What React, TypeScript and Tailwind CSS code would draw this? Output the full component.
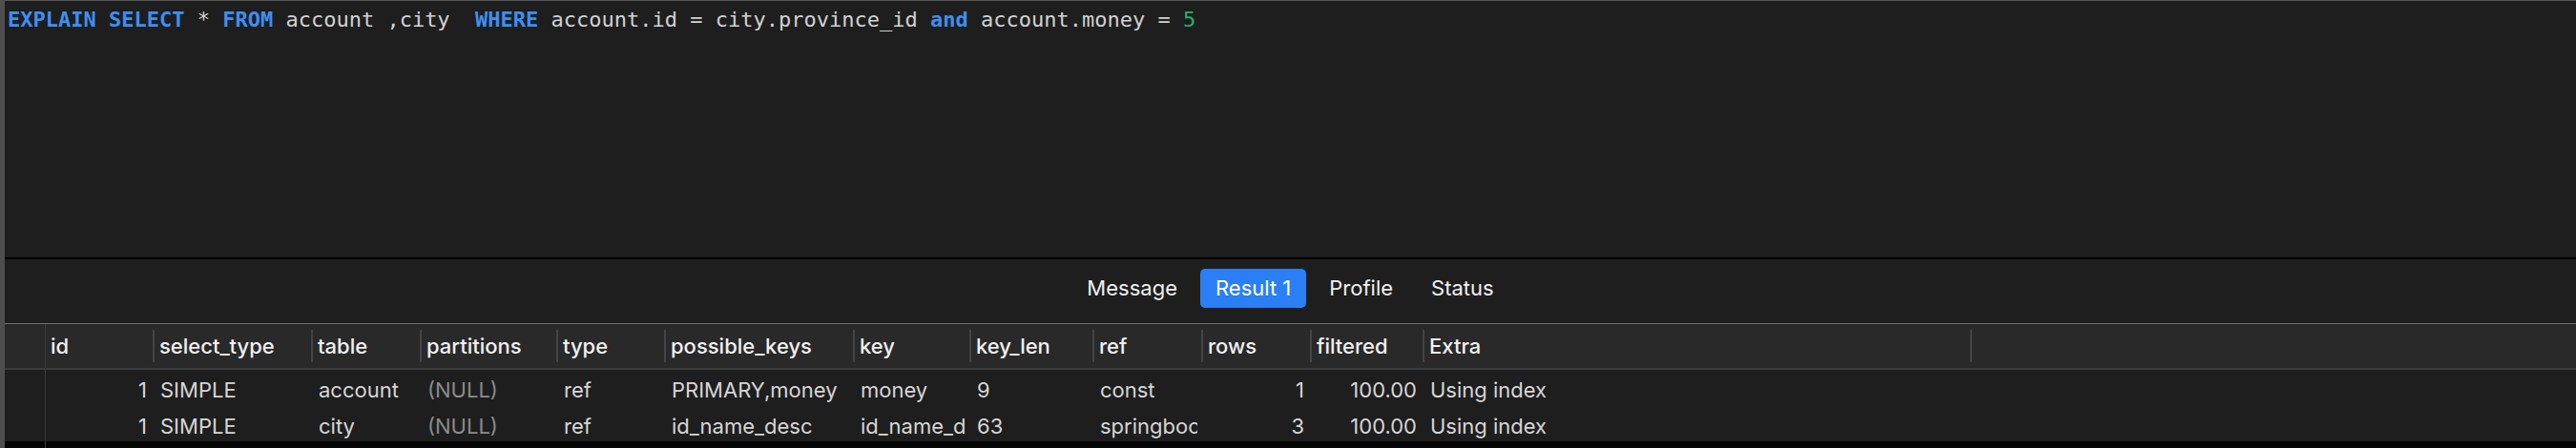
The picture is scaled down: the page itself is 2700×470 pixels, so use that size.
import React from 'react'

type Col = { name: string; w: number; right?: boolean }

const COLS: Col[] = [
  { name: 'id', w: 114, right: true },
  { name: 'select_type', w: 166 },
  { name: 'table', w: 114 },
  { name: 'partitions', w: 143 },
  { name: 'type', w: 113 },
  { name: 'possible_keys', w: 198 },
  { name: 'key', w: 122 },
  { name: 'key_len', w: 129 },
  { name: 'ref', w: 114 },
  { name: 'rows', w: 114, right: true },
  { name: 'filtered', w: 118, right: true },
  { name: 'Extra', w: 574 },
]

const ROWS: string[][] = [
  ['1', 'SIMPLE', 'account', '(NULL)', 'ref', 'PRIMARY,money', 'money', '9', 'const', '1', '100.00', 'Using index'],
  ['1', 'SIMPLE', 'city', '(NULL)', 'ref', 'id_name_desc', 'id_name_desc', '63', 'springboot.account.id', '3', '100.00', 'Using index'],
]

const TABS = ['Message', 'Result 1', 'Profile', 'Status']

const Kw = ({ children }: { children: React.ReactNode }) => (
  <span className="font-bold text-[#3f8ff0]">{children}</span>
)

const Editor = () => (
  <div className="h-[270px] border-t border-[#575757] pl-[3px] pt-[7px]">
    <pre className="font-['DejaVu_Sans_Mono',monospace] text-[22px] leading-[26px] text-[#d2d2d2]">
      <Kw>EXPLAIN</Kw> <Kw>SELECT</Kw> * <Kw>FROM</Kw> account ,city  <Kw>WHERE</Kw> account.id = city.province_id{' '}
      <Kw>and</Kw> account.money = <span className="text-[#27b06c]">5</span>
    </pre>
  </div>
)

const TabBar = () => (
  <div className="flex h-[67px] items-start justify-center gap-2 pt-[10px]">
    {TABS.map((t) => (
      <div
        key={t}
        className={
          t === 'Result 1'
            ? 'flex h-[41px] items-center rounded-[5px] bg-[#2a7ff5] px-4 text-[22px] text-white'
            : 'flex h-[41px] items-center px-4 text-[22px] text-[#f0f0f0]'
        }
      >
        {t}
      </div>
    ))}
  </div>
)

const Grid = () => (
  <div className="flex flex-1 flex-col overflow-hidden">
    <div className="h-px bg-[#6f6f6f]" />
    {/* header */}
    <div className="flex h-[46px] shrink-0 bg-[#292929]">
      <div className="w-[43px] shrink-0 border-r border-[#3a3a3a]" />
      {COLS.map((c) => (
        <div key={c.name} className="flex shrink-0 items-center justify-between" style={{ width: c.w }}>
          <span className="pl-[5px] font-medium text-[#f0f0f0]">{c.name}</span>
          <span className="h-[34px] w-[2px] bg-[#444444]" />
        </div>
      ))}
    </div>
    <div className="flex h-[2px] shrink-0 bg-[#3c3c3c]">
      <div className="w-[43px] shrink-0 border-r border-[#3a3a3a]" />
    </div>
    {/* rows */}
    <div className="flex h-[75px] shrink-0 flex-col overflow-hidden">
      <div className="flex h-[2px] shrink-0">
        <div className="w-[43px] shrink-0 border-r border-[#3a3a3a]" />
      </div>
      {ROWS.map((r, i) => (
        <div key={i} className="flex h-[38px] shrink-0">
          <div className="w-[43px] shrink-0 border-r border-[#3a3a3a]" />
          {COLS.map((c, j) => (
            <div
              key={c.name}
              className={
                c.right
                  ? 'flex shrink-0 items-center justify-end pr-2'
                  : 'flex shrink-0 items-center pl-[6px] pr-[6px]'
              }
              style={{ width: c.w }}
            >
              <div
                className={
                  r[j] === '(NULL)'
                    ? 'overflow-hidden whitespace-nowrap text-[#8b8b8b]'
                    : 'overflow-hidden whitespace-nowrap text-[#d6d6d6]'
                }
              >
                {r[j]}
              </div>
            </div>
          ))}
        </div>
      ))}
    </div>
    <div className="flex flex-1 bg-[#050505]">
      <div className="w-[43px] shrink-0 border-r border-[#3a3a3a]" />
    </div>
  </div>
)

export default function App() {
  return (
    <div className="flex h-[470px] w-[2700px] overflow-hidden bg-[#1e1e1e] font-['Inter',sans-serif] text-[22px]">
      <div className="w-[5px] shrink-0 bg-[#4e4e4e]" />
      <div className="flex min-w-0 flex-1 flex-col">
        <Editor />
        <div className="h-[2px] shrink-0 bg-black" />
        <TabBar />
        <Grid />
      </div>
    </div>
  )
}
